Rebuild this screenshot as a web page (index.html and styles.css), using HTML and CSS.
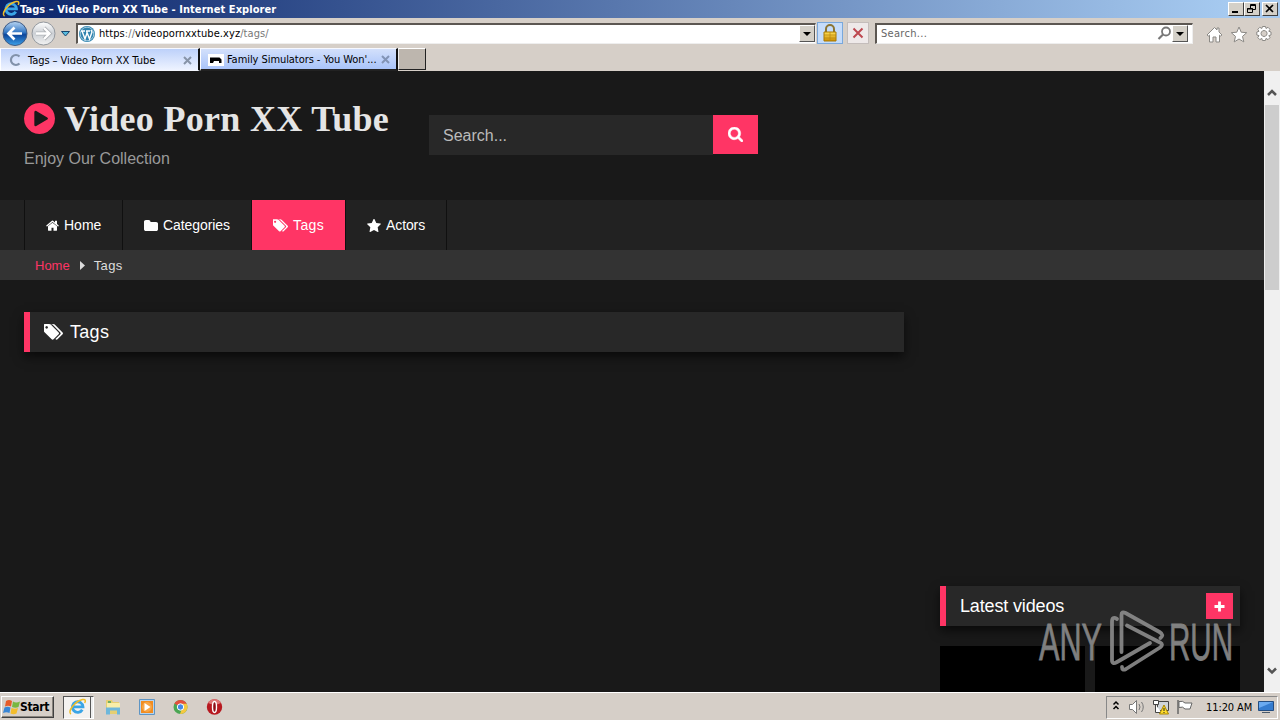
FILE: index.html
```html
<!DOCTYPE html>
<html lang="en">
<head>
<meta charset="utf-8">
<title>Tags – Video Porn XX Tube</title>
<link rel="stylesheet" href="styles.css">
</head>
<body>
<svg class="defs" width="0" height="0">
  <defs>
    <symbol id="tags" viewBox="0 128 1836 1536"><path d="M384 448q0-53-37.500-90.500t-90.500-37.500-90.500 37.500-37.500 90.500 37.500 90.500 90.500 37.500 90.500-37.500 37.500-90.500zm1067 576q0 53-37 90l-491 492q-39 37-91 37-53 0-90-37l-715-716q-38-37-64.500-101t-26.500-117v-416q0-52 38-90t90-38h416q53 0 117 26.500t102 64.500l715 714q37 39 37 91zm384 0q0 53-37 90l-491 492q-39 37-91 37-36 0-59-14t-53-45l470-470q37-37 37-90 0-52-37-91l-715-714q-38-38-102-64.500t-117-26.500h224q53 0 117 26.500t102 64.500l715 714q37 39 37 91z"/></symbol>
    <symbol id="ie" viewBox="0 0 18 18"><path d="M13.800 11.700A5.300 5.300 0 1 1 14.500 8.800H5.200" fill="none" stroke="#3aa5e6" stroke-width="2.800"/><path d="M2.500 16.200C-1.500 14 6 3.500 14 1.600c3.300-.7 3.200 1.500 2.200 3.400" fill="none" stroke="#efbd28" stroke-width="1.500"/></symbol>
    <linearGradient id="blueball" x2="0" y2="1"><stop stop-color="#b9d6f3"/><stop offset=".45" stop-color="#3478c4"/><stop offset=".55" stop-color="#0d469b"/><stop offset="1" stop-color="#3da2ea"/></linearGradient>
    <linearGradient id="greyball" x2="0" y2="1"><stop stop-color="#fff"/><stop offset=".5" stop-color="#ccd0d5"/><stop offset="1" stop-color="#f2f2f2"/></linearGradient>
    <linearGradient id="gold" x2="0" y2="1"><stop stop-color="#ffe058"/><stop offset="1" stop-color="#cb8c00"/></linearGradient>
  </defs>
</svg>
<div class="window">
  <header class="titlebar">
    <svg class="title-ie" width="18" height="18"><use href="#ie"/></svg>
    <span class="title-text">Tags – Video Porn XX Tube - Internet Explorer</span>
    <div class="win-buttons">
      <span class="win-btn"><svg width="12" height="10"><path d="M2 8h6" stroke="#000" stroke-width="2"/></svg></span>
      <span class="win-btn restore"><svg width="12" height="10"><path d="M4.500 5V.5h5v5H7M4 1.500h6M1.500 4.500h5v4h-5zM1 5h6" fill="none" stroke="#000"/></svg></span>
      <span class="win-btn"><svg width="12" height="10"><path d="M2 1l7 7M9 1L2 8" stroke="#000" stroke-width="1.700"/></svg></span>
    </div>
  </header>

  <div class="toolbar">
    <svg class="nav-balls" width="74" height="30" viewBox="0 0 74 30">
      <circle cx="15" cy="15.500" r="12" fill="url(#blueball)" stroke="#405b83"/>
      <path d="M22 15.500H9M14.500 9.500l-6 6 6 6" fill="none" stroke="#fff" stroke-width="2.700"/>
      <circle cx="43.500" cy="15.500" r="11.500" fill="url(#greyball)" stroke="#92979d"/>
      <path d="M36 15.500h13M44 10l5.500 5.500L44 21" fill="none" stroke="#aeb1b5" stroke-width="4"/>
      <path d="M36 15.500h13M44 10l5.500 5.500L44 21" fill="none" stroke="#fff" stroke-width="2.400"/>
      <path d="M61.500 13.500h8L65.500 18z" fill="#58bde0" stroke="#17456e"/>
    </svg>
    <div class="field address">
      <svg width="18" height="18" viewBox="0 0 18 18"><circle cx="9" cy="9" r="8" fill="#2f83ae"/><circle cx="9" cy="9" r="6.800" fill="none" stroke="#cfe4ef" stroke-width=".7"/><path d="M3 6h4M8 6h4M4 6l3 8 2-6M8.500 6l3 8 2.500-7-1-2" fill="none" stroke="#fff" stroke-width="1.400"/></svg>
      <span class="url">https<i>://</i>videopornxxtube.xyz<i>/tags/</i></span>
      <span class="drop"></span>
    </div>
    <span class="tool lock"><svg width="16" height="18" viewBox="0 0 16 18"><path d="M4 9V5a4 4 0 0 1 8 0v4" fill="none" stroke="#8b7534" stroke-width="2"/><path d="M2 8h12v9H2z" fill="url(#gold)" stroke="#a97800"/><path d="M2 11h12M2 14h12M8 8v9" stroke="#b88710" stroke-width=".7"/></svg></span>
    <span class="tool stop"><svg width="12" height="12"><path d="M1.500 1.500l9 9M10.500 1.500l-9 9" stroke="#bd4850" stroke-width="2"/></svg></span>
    <div class="field search">
      <span class="hint">Search...</span>
      <svg width="15" height="15"><circle cx="9" cy="5.500" r="4" fill="none" stroke="#777" stroke-width="1.800"/><path d="M6 8.500L1.500 13" stroke="#777" stroke-width="2.200"/></svg>
      <span class="drop"></span>
    </div>
    <svg class="tools" width="68" height="20" viewBox="0 0 68 20" fill="#fff" stroke="#8b8985">
      <path d="M1 10L8.500 2.500 11 5V3h2v4l3 3-1.500 1-1-.8V17H10v-5H7v5H3.500v-6.800l-1 .8z"/>
      <path d="M33 2l2.200 5.200 5.500.5-4.200 3.700 1.300 5.500-4.800-2.900-4.800 2.900 1.300-5.500-4.200-3.700 5.500-.5z"/>
      <path fill-rule="evenodd" d="M56.500 1.500h3l.5 2 2-1.200 2 2-1.200 2 2.200.7v3l-2.200.6 1.200 2-2 2-2-1.200-.6 2.100h-3l-.6-2.100-2 1.200-2-2 1.200-2-2.200-.6V7l2.200-.7-1.200-2 2-2 2 1.200zM58 5.500a3 3 0 1 0 .1 0z"/>
    </svg>
  </div>

  <div class="tabs">
    <div class="tab active">
      <svg width="14" height="14"><path d="M11.500 3.500A5 5 0 1 0 11.500 10.500" fill="none" stroke="#8292aa" stroke-width="2.200"/></svg>
      <span class="tab-text t1">Tags – Video Porn XX Tube</span>
      <svg class="close" width="9" height="9"><path d="M1 1l7 7M8 1L1 8" stroke="#8794a8" stroke-width="2"/></svg>
    </div>
    <div class="tab">
      <svg width="16" height="12"><path d="M0 0h16v12H0z" fill="#fff"/><path d="M2 3.500h9.500l2 2V9H11V7H6l-1 2H2z" fill="#000"/></svg>
      <span class="tab-text t2">Family Simulators - You Won'...</span>
      <svg class="close" width="9" height="9"><path d="M1 1l7 7M8 1L1 8" stroke="#8294b6" stroke-width="2"/></svg>
    </div>
    <div class="new-tab"></div>
  </div>

  <div class="viewport">
    <main class="page">
      <div class="site-header">
        <div class="brand">
          <div class="logo"><svg width="31" height="31" viewBox="128 128 1536 1536" fill="#ff3565"><path d="M896 128q209 0 385.500 103t279.500 279.500 103 385.500-103 385.500-279.500 279.500-385.500 103-385.500-103-279.500-279.500-103-385.500 103-385.500 279.500-279.500 385.500-103zm384 823q32-18 32-55t-32-55l-544-320q-31-19-64-1-32 19-32 56v640q0 37 32 56 16 8 32 8 17 0 32-9z"/></svg><span>Video Porn XX Tube</span></div>
          <div class="tagline">Enjoy Our Collection</div>
        </div>
        <div class="site-search">
          <div class="site-input">Search...</div>
          <div class="site-go"><svg width="15" height="15" viewBox="64 128 1664 1664" fill="#fff" stroke="#fff" stroke-width="50"><path d="M1216 832q0-185-131.500-316.500t-316.500-131.500-316.500 131.500-131.500 316.500 131.500 316.500 316.500 131.500 316.500-131.500 131.500-316.500zm512 832q0 52-38 90t-90 38q-54 0-90-38l-343-342q-179 124-399 124-143 0-273.500-55.500t-225-150-150-225-55.500-273.500 55.500-273.500 150-225 225-150 273.500-55.500 273.500 55.500 225 150 150 225 55.500 273.500q0 220-124 399l343 343q37 37 37 90z"/></svg></div>
        </div>
      </div>
      <nav class="menu">
        <a class="item home"><svg width="13" height="11" viewBox="64 220 1664 1316"><path d="M1472 992v480q0 26-19 45t-45 19h-384v-384h-256v384h-384q-26 0-45-19t-19-45v-480q0-1 .5-3t.5-3l575-474 575 474q1 2 1 6zm223-69l-62 74q-8 9-21 11h-3q-13 0-21-7l-692-577-692 577q-12 8-24 7-13-2-21-11l-62-74q-8-10-7-23.500t11-21.500l719-599q32-26 76-26t76 26l244 204v-195q0-14 9-23t23-9h192q14 0 23 9t9 23v408l219 182q10 8 11 21.500t-7 23.500z"/></svg>Home</a>
        <a class="item cats"><svg width="14" height="11" viewBox="64 128 1664 1408" preserveAspectRatio="none"><path d="M1728 608v704q0 92-66 158t-158 66h-1216q-92 0-158-66t-66-158v-960q0-92 66-158t158-66h320q92 0 158 66t66 158v32h672q92 0 158 66t66 158z"/></svg>Categories</a>
        <a class="item current"><svg width="15" height="13"><use href="#tags"/></svg><span>Tags</span></a>
        <a class="item actors"><svg width="14" height="13" viewBox="64 59 1664 1560"><path d="M1728 647q0 22-26 48l-363 354 86 500q1 7 1 20 0 21-10.500 35.500t-30.500 14.500q-19 0-40-12l-449-236-449 236q-22 12-40 12-21 0-31.500-14.500t-10.500-35.500q0-6 2-20l86-500-364-354q-25-27-25-48 0-37 56-46l502-73 225-455q19-41 49-41t49 41l225 455 502 73q56 9 56 46z"/></svg>Actors</a>
      </nav>
      <div class="crumbs"><a>Home</a><svg width="5" height="9"><path d="M0 0l5 4.500L0 9z" fill="#ddd"/></svg><span>Tags</span></div>
      <div class="content">
        <h2 class="bar"><svg width="19" height="16"><use href="#tags"/></svg><span class="bar-tags">Tags</span></h2>
        <aside class="side">
          <h2 class="bar"><span class="latest">Latest videos</span><span class="plus"><svg width="11" height="11"><path d="M5.500 .5v10M.5 5.500h10" stroke="#fff" stroke-width="2.800"/></svg></span></h2>
          <div class="thumbs"><div></div><div></div></div>
        </aside>
      </div>
    </main>
    <div class="scrollbar">
      <svg width="10" height="8"><path d="M1 7L5 3l4 4" fill="none" stroke="#555" stroke-width="2.500"/></svg>
      <div class="thumb"></div>
      <svg class="down" width="10" height="8"><path d="M1 1.500l4 4 4-4" fill="none" stroke="#555" stroke-width="2.500"/></svg>
    </div>
    <svg class="watermark" width="200" height="66" viewBox="0 0 200 66">
      <g class="mark-text"><text x="2" y="50.500" textLength="63" lengthAdjust="spacingAndGlyphs">ANY</text><text x="132" y="50.500" textLength="64" lengthAdjust="spacingAndGlyphs">RUN</text></g>
      <g fill="none" stroke="#8c8c8c" stroke-width="3.800" stroke-linejoin="round" stroke-linecap="round"><path d="M80 10q-5-3-5 3v38q0 5 5 2l33-19"/><path d="M84.500 43V6q0-4 4-2l34 19q5 3 1 6"/><path d="M90 16.500l33 17q4 2 0 5L89 60q-4 2-4-2"/></g>
    </svg>
  </div>

  <footer class="taskbar">
    <div class="start"><svg width="18" height="17" viewBox="0 0 18 17"><path d="M3 2q3-2 6 0L8 7.500Q5 6 2 7.500z" fill="#e65b28"/><path d="M10 2.500q3 2 7 0L15.500 8q-3 1.500-6.500 0z" fill="#78b740"/><path d="M1.500 8.500q3-1.500 6 0L6.500 14q-3-1.500-6.500 0z" fill="#3986d5"/><path d="M8.500 9q3.500 1.500 6.500 0l-1.500 5.500q-3 1.500-6 0z" fill="#f3bd2c"/></svg><b>Start</b></div>
    <div class="task-ie"><svg width="19" height="18"><use href="#ie"/></svg></div>
    <svg class="quick" width="120" height="20" viewBox="0 0 120 20">
      <path d="M3 3h6l1 2h6v12H3z" fill="#e6cf72"/><path d="M4 6h13v5H4z" fill="#f8eea9"/><path d="M3 10.500h14v7h-3v-4H7v4H3z" fill="#6eb7db"/><path d="M5 4h3v2H5z" fill="#70ad62"/>
      <path d="M36.500 2.500h15v15h-15z" fill="#b7d3ed" stroke="#5e95c4"/><path d="M38 4h12v12H38z" fill="#f18c20"/><circle cx="44" cy="10" r="5" fill="#f7a546"/><path d="M41.500 6l6 4-6 4z" fill="#fff"/>
      <circle cx="77.500" cy="10" r="7" fill="#4ba653"/><path d="M71.400 6.500a7 7 0 0 1 12.200 0L77.500 10z" fill="#e44e3d"/><path d="M83.700 6.700a7 7 0 0 1-6.700 10.200l2.500-6.900-2-3.300z" fill="#f6c83f"/><circle cx="77.500" cy="10" r="3.200" fill="#4589e6" stroke="#fff"/>
      <circle cx="111.500" cy="10" r="7.700" fill="#b71920"/><path d="M105 6a7.500 7.500 0 0 1 13 0q-6 3-13 0z" fill="#df7575"/><ellipse cx="111.500" cy="10" rx="2" ry="5.500" fill="#8f1018" stroke="#fff" stroke-width="1.400"/>
    </svg>
    <div class="tray">
      <svg width="86" height="18" viewBox="0 0 86 18">
        <path d="M1.500 6.500L4 4l2.500 2.500M1.500 11L4 8.500 6.500 11" fill="none" stroke="#000" stroke-width="1.500"/>
        <path d="M17.500 6.500h3l4-4v13l-4-4h-3z" fill="#fff" stroke="#777"/><path d="M27 6q2 3 0 6M29.500 4q3.500 5 0 10" fill="none" stroke="#777"/>
        <path d="M45.500 3.500h11v9h-11z" fill="#d0d5da" stroke="#444"/><path d="M41.500 2.500h5v4h-5zM43.500 6.500v8h6" fill="#fff" stroke="#444"/><path d="M52 7l4.500 9h-9z" fill="#ffdc2a" stroke="#a88500"/><path d="M52 10v3M52 14v1" stroke="#222"/>
        <path d="M66 2v14" stroke="#666" stroke-width="1.500"/><path d="M67 3.500q4-1 6 1.500h7l-2 6h-5q-2-3-6-1.500z" fill="#fff" stroke="#666"/>
      </svg>
      <span class="clock">11:20 AM</span>
      <svg width="16" height="14"><path d="M.5 1.500h15v9H.5z" fill="#357ccf" stroke="#244d80"/><path d="M1 2h14L1 8z" fill="#6aaaf0"/><path d="M4 12.500h8" stroke="#4a5969"/></svg>
    </div>
  </footer>
</div>
</body>
</html>
```
FILE: styles.css
```css
* { box-sizing: border-box; }
body { margin: 0; background: #191919; font-family: "Liberation Sans", Arial, sans-serif; }
svg { display: block; flex: none; }
.defs { position: absolute; }
.window { width: 1280px; height: 720px; display: flex; flex-direction: column; overflow: hidden; white-space: nowrap; }

.titlebar, .toolbar, .tabs, .taskbar { font-family: "DejaVu Sans Condensed", "DejaVu Sans", sans-serif; font-size: 11px; color: #000; }
.titlebar { height: 18px; flex: none; display: flex; align-items: center; background: linear-gradient(90deg, #0a246a, #a6caf0 96%); padding: 0 2px; }
.title-text { color: #fff; font-weight: bold; letter-spacing: 0.07px; }
.win-buttons { margin-left: auto; display: flex; }
.win-btn { width: 16px; height: 14px; padding: 1px; background: #d4d0c8; border: 1px solid; border-color: #fff #404040 #404040 #fff; }
.restore { margin-right: 2px; }

.toolbar { height: 30px; flex: none; display: flex; align-items: center; background: #d6cfc8; padding-right: 6px; }
.nav-balls { margin-right: 2px; }
.field { height: 21px; display: flex; align-items: center; background: #fff; border: 1px solid; border-width: 2px 1px 1px 2px; border-color: #5c5752 #eee #eee #5c5752; }
.address { width: 740px; padding-left: 0; }
.url { margin-left: 3px; letter-spacing: 0.07px; }
.url i { font-style: normal; color: #777; }
.drop { width: 16px; height: 17px; background: #d4d0c8; border: 1px solid; border-color: #fff #555 #555 #fff; display: flex; align-items: center; justify-content: center; }
.drop::after { content: ""; border: 4px solid transparent; border-top-color: #000; border-bottom: 0; }
.address .drop { margin-left: auto; }
.tool { display: flex; align-items: center; justify-content: center; height: 22px; }
.lock { width: 26px; margin-left: 1px; background: #c5dcfa; border: 1px solid #79a8dc; }
.stop { width: 22px; margin-left: 4px; background: #eee9e9; border: 1px solid #c4bdbb; }
.search { width: 318px; margin-left: 6px; padding-left: 4px; }
.search svg { margin-left: auto; }
.search .drop { margin-left: 0; margin-right: 4px; }
.hint { color: #666; letter-spacing: 0.3px; }
.tools { margin: 4px 0 0 auto; }

.tabs { height: 23px; flex: none; display: flex; background: #d6cfc8; }
.tab { width: 198px; display: flex; align-items: center; padding: 1px 6px 0 7px; background: linear-gradient(#d3e0fb, #a9c4fa); border: 1px solid; border-color: #f6f8ff #111 #222 #fff; border-right-width: 2px; border-bottom-width: 2px; }
.tab.active { width: 200px; padding-left: 7px; padding-right: 6px; background: linear-gradient(#bdd1fa, #eef3ff); border-bottom: 1px solid #f4f7ff; }
.tab-text { margin-left: 3px; letter-spacing: -0.06px; }
.tab.active .tab-text { margin-left: 6px; letter-spacing: -0.05px; }
.close { margin-left: auto; }
.new-tab { width: 28px; height: 22px; background: #bdb6ae; border: 1px solid; border-width: 1px 1px 1px 1px; border-color: #fff #222 #222 #eee; }

.viewport { position: relative; height: 621px; flex: none; display: flex; overflow: hidden; }
.page { width: 1264px; background: #191919; }
.site-header { height: 129px; display: flex; padding-left: 24px; }
.brand { width: 405px; padding-top: 27px; }
.logo { height: 42px; display: flex; align-items: center; gap: 9px; font: bold 36px/42px "Liberation Serif", "Times New Roman", serif; letter-spacing: 0.3px; color: #e5e5e5; }
.logo svg { margin-top: -2px; }
.tagline { margin-top: 9px; font-size: 16px; line-height: 20px; color: #999; }
.site-search { display: flex; margin-top: 44px; height: 40px; font-size: 16px; }
.site-input { width: 284px; padding-left: 14px; line-height: 42px; background: #282828; color: #bbb; }
.site-go { width: 45px; height: 39px; display: flex; align-items: center; justify-content: center; background: #ff3565; }
.menu { height: 50px; display: flex; padding-left: 24px; background: #222; color: #fff; fill: #fff; font-size: 14px; }
.item { display: flex; align-items: center; gap: 5px; border-right: 1px solid #101010; }
.home { width: 99px; padding-left: 21px; border-left: 1px solid #101010; }
.cats { width: 129px; padding-left: 21px; letter-spacing: -0.07px; }
.current { width: 94px; padding-left: 21px; gap: 5px; background: #ff3565; letter-spacing: 0.4px; }
.actors { width: 101px; padding-left: 21px; letter-spacing: -0.1px; }
.crumbs { height: 30px; display: flex; align-items: center; gap: 10px; padding-left: 35px; background: #333; color: #ddd; font-size: 13px; }
.crumbs svg { margin: 0 -1px 0 0; }
.crumbs span { letter-spacing: 0.4px; }
.crumbs a { color: #ff3565; }
.content { display: flex; align-items: flex-start; padding: 32px 24px 0; gap: 36px; }
.bar { width: 880px; height: 40px; flex: none; margin: 0; display: flex; align-items: center; gap: 7px; padding-left: 14px; border-left: 6px solid #ff3565; background: #282828; color: #fff; fill: #fff; font-size: 18px; font-weight: normal; box-shadow: 0 5px 10px rgba(0, 0, 0, .6); }
.bar-tags { letter-spacing: 0.3px; }
.latest { letter-spacing: -0.15px; }
.side { width: 300px; margin-top: 274px; flex: none; }
.side .bar { width: 300px; padding-right: 7px; }
.plus { width: 27px; height: 26px; margin-left: auto; display: flex; align-items: center; justify-content: center; background: #ff3565; }
.thumbs { display: flex; gap: 10px; margin-top: 20px; }
.thumbs div { width: 145px; height: 46px; background: #000; }
.scrollbar { width: 16px; display: flex; flex-direction: column; align-items: center; padding-top: 17px; background: #f0f0f0; }
.thumb { width: 14px; height: 185px; margin-top: 9px; background: #cdcdcd; }
.down { margin-top: 377px; }
.watermark { position: absolute; left: 1037px; top: 538px; opacity: .9; overflow: visible; }
.mark-text { fill: #8c8c8c; stroke: #8c8c8c; stroke-width: .8px; font: 52px "Liberation Sans", Arial, sans-serif; }

.taskbar { height: 28px; flex: none; display: flex; align-items: center; padding: 2px 2px 1px 1px; background: #d6cfc8; border-top: 1px solid #fff; }
.start { width: 53px; height: 22px; display: flex; align-items: center; padding-left: 1px; border: 1px solid; border-color: #fff #404040 #404040 #fff; box-shadow: inset -1px -1px #89847d; }
.start b { margin-left: -1px; font-size: 12px; letter-spacing: -0.3px; }
.task-ie { width: 31px; height: 23px; margin-left: 9px; display: flex; align-items: center; padding-left: 4px; background: linear-gradient(90deg, #f4f2f0 26px, #555 26px, #555 27px, #eee 27px); border: 1px solid; border-color: #555 #fff #fff #555; }
.quick { margin-left: 9px; }
.tray { width: 172px; height: 23px; margin-left: auto; display: flex; align-items: center; padding: 0 3px 0 5px; border: 1px solid; border-color: #888 #fff #fff #888; }
.clock { margin-left: 8px; margin-right: auto; letter-spacing: -0.1px; }
```
